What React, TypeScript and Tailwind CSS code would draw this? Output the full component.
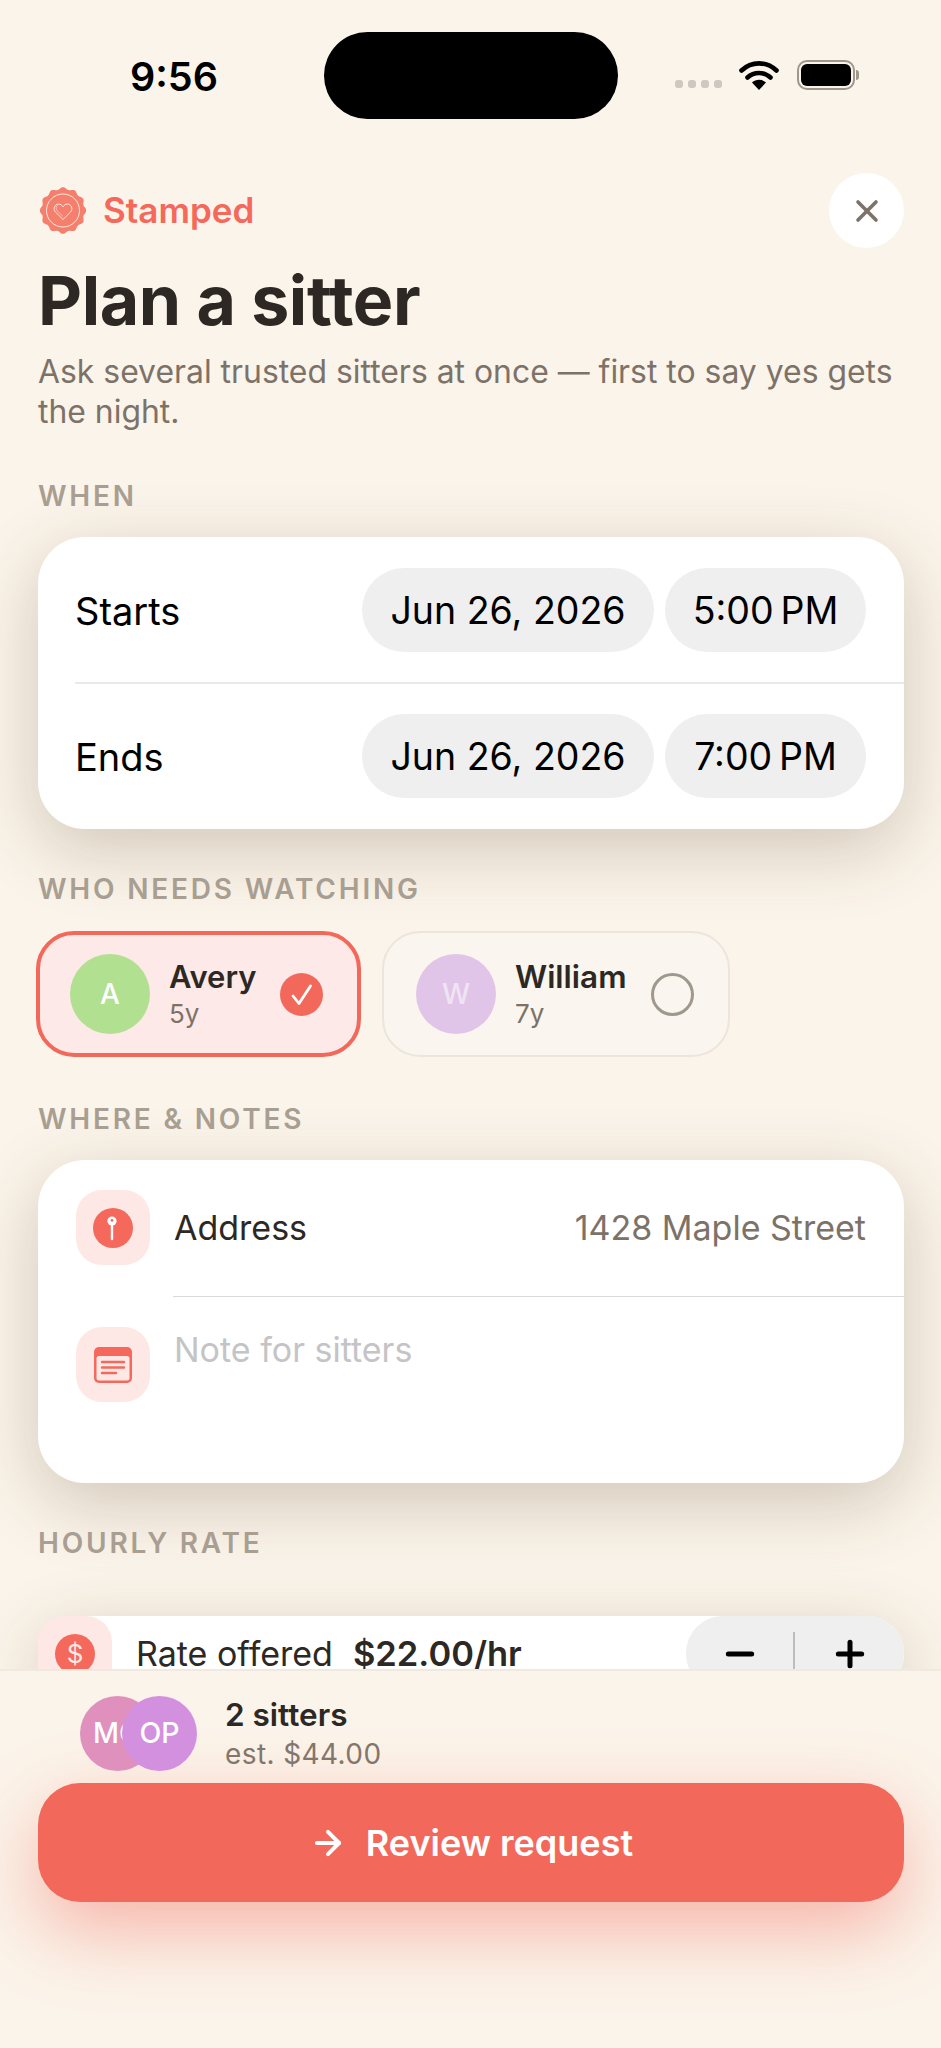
import { ArrowRight, Minus, Plus, X } from "lucide-react";

const FONT = "font-['Inter','Liberation_Sans',sans-serif]";

const sealPath = () => {
  const points: string[] = [];
  for (let i = 0; i < 144; i++) {
    const a = (i / 144) * Math.PI * 2;
    const r = 22.2 + 1.1 * Math.cos(a * 12);
    points.push(`${(23 + r * Math.sin(a)).toFixed(2)} ${(23 - r * Math.cos(a)).toFixed(2)}`);
  }
  return `M${points.join("L")}Z`;
};

const SealLogo = () => (
  <svg width="46" height="47" viewBox="0 0 46 46">
    <path d={sealPath()} fill="#f47f6c" />
    <circle cx="23" cy="23" r="16.5" fill="none" stroke="#fff" strokeWidth="0.9" opacity="0.9" />
    <path
      d="M23 32 L15.5 24.6 C12.6 21.4 14.6 16.6 18.6 16.6 C20.6 16.6 22 17.6 23 19.4 C24 17.6 25.4 16.6 27.4 16.6 C31.4 16.6 33.4 21.4 30.5 24.6 Z"
      fill="none"
      stroke="#fff"
      strokeWidth="0.9"
      opacity="0.85"
    />
    <path
      d="M23 29 L16.8 23 C15.6 21.4 16 18.8 17.6 17.8"
      fill="none"
      stroke="#fff"
      strokeWidth="0.7"
      opacity="0.7"
    />
  </svg>
);

const WifiIcon = () => (
  <svg width="40" height="30" viewBox="0 0 40 30">
    <path d="M20 30 L13 22.5 C17 18.8 23 18.8 27 22.5 Z" fill="#000" />
    <path d="M8.5 17.5 C15 11.5 25 11.5 31.5 17.5" fill="none" stroke="#000" strokeWidth="4.6" strokeLinecap="round" />
    <path d="M2.5 10.5 C12.5 1 27.5 1 37.5 10.5" fill="none" stroke="#000" strokeWidth="4.6" strokeLinecap="round" />
  </svg>
);

const PinIcon = () => (
  <svg width="40" height="40" viewBox="0 0 40 40">
    <circle cx="20" cy="20" r="20" fill="#f4695b" />
    <circle cx="19" cy="13" r="4.6" fill="#fff" />
    <circle cx="19" cy="12.4" r="1.4" fill="#f4695b" />
    <path d="M19 15 V31" stroke="#fff" strokeWidth="2.4" strokeLinecap="round" />
  </svg>
);

const NoteIcon = () => (
  <svg width="38" height="36" viewBox="0 0 38 36">
    <rect width="38" height="36" rx="5" fill="#f4695b" />
    <rect x="2.5" y="9" width="33" height="24.5" rx="2.5" fill="#fde8e6" />
    <path d="M8 15 H30 M8 20.5 H30 M8 26 H22" stroke="#f4695b" strokeWidth="2.4" strokeLinecap="round" />
  </svg>
);

const CheckMark = () => (
  <svg width="43" height="43" viewBox="0 0 43 43">
    <circle cx="21.5" cy="21.5" r="21.5" fill="#f2695b" />
    <path d="M13 23 L19 30.5 L30.5 13" fill="none" stroke="#fff" strokeWidth="2.8" strokeLinecap="round" strokeLinejoin="round" />
  </svg>
);

const Label = ({ text, className }: { text: string; className: string }) => (
  <p className={`text-[28px] leading-[34px] font-semibold tracking-[2.8px] text-[#a89e91] ${className}`}>{text}</p>
);

const Pill = ({ text, className }: { text: string; className: string }) => (
  <span className={`flex h-[84px] items-center justify-center rounded-[42px] bg-[#efefef] pt-[2px] text-[37.5px] leading-none text-black ${className}`}>
    {text}
  </span>
);

const TimeRow = ({ label, date, time }: { label: string; date: string; time: string }) => (
  <div className="flex h-[84px] items-center">
    <span className="flex-1 pt-[2px] text-[38px] text-black">{label}</span>
    <div className="flex gap-[11px]">
      <Pill text={date} className="w-[292px]" />
      <Pill text={time} className="w-[201px]" />
    </div>
  </div>
);

const Tile = ({ children }: { children: React.ReactNode }) => (
  <div className="flex h-[75px] w-[74px] shrink-0 items-center justify-center rounded-[26px] bg-[#fde8e6]">
    {children}
  </div>
);

export default function App() {
  return (
    <div className={`${FONT} flex h-[2048px] w-[941px] flex-col overflow-hidden bg-[#fbf4ea] text-[#2d2823]`}>
      <main className="h-[1669px] shrink-0 overflow-hidden pl-[38px] pr-[37px]">
        <div className="-ml-[38px] -mr-[37px] flex h-[173px] items-start pt-[32px]">
          <div className="w-[324px] pl-[130px] pt-[21px] text-[39.5px] leading-[48px] font-semibold text-black">9:56</div>
          <div className="h-[87px] w-[294px] rounded-[44px] bg-black" />
          <div className="flex items-center pl-[57px] pt-[28px]">
            <div className="mt-[18px] flex gap-[5px]">
              <span className="h-[8px] w-[8px] rounded-[3px] bg-[#cdc8c1]" />
              <span className="h-[8px] w-[8px] rounded-[3px] bg-[#cdc8c1]" />
              <span className="h-[8px] w-[8px] rounded-[3px] bg-[#cdc8c1]" />
              <span className="h-[8px] w-[8px] rounded-[3px] bg-[#cdc8c1]" />
            </div>
            <div className="ml-[17px]">
              <WifiIcon />
            </div>
            <div className="ml-[18px] flex items-center">
              <div className="flex h-[30px] w-[58px] rounded-[10px] border-[2px] border-[#9d978c] p-[2px]">
                <div className="flex-1 rounded-[6px] bg-black" />
              </div>
              <div className="ml-[1px] h-[10px] w-[3px] rounded-r-[3px] bg-[#9d978c]" />
            </div>
          </div>
        </div>

        <div className="flex h-[75px] items-center justify-between">
          <div className="flex items-center gap-[17px] pl-[2px]">
            <SealLogo />
            <span className="text-[35px] font-semibold text-[#f4695b]">Stamped</span>
          </div>
          <button className="flex h-[75px] w-[75px] items-center justify-center rounded-full bg-white">
            <X size={36} strokeWidth={2.4} color="#7d7268" />
          </button>
        </div>

        <h1 className="mt-[18px] text-[68px] leading-[68px] font-bold tracking-[-0.4px]">Plan a sitter</h1>
        <p className="mt-[18px] text-[31.9px] leading-[40px] text-[#7d7268]">
          Ask several trusted sitters at once — first to say yes gets the night.
        </p>

        <Label text="WHEN" className="mt-[47px]" />
        <section className="mt-[24px] h-[292px] rounded-[47px] bg-white py-[31px] pl-[37px] shadow-[0_20px_70px_rgba(80,60,30,0.24)]">
          <div className="pr-[38px]">
            <TimeRow label="Starts" date="Jun 26, 2026" time={"5:00\u2009PM"} />
          </div>
          <div className="my-[30px] h-[2px] bg-[#e9e9e9]" />
          <div className="pr-[38px]">
            <TimeRow label="Ends" date="Jun 26, 2026" time={"7:00\u2009PM"} />
          </div>
        </section>

        <Label text="WHO NEEDS WATCHING" className="mt-[43px]" />
        <div className="mt-[25px] -ml-[2px] flex gap-[21px]">
          <div className="flex h-[126px] w-[325px] items-center rounded-[38px] border-[4px] border-[#f2695b] bg-[#fde9e7] pl-[30px] pr-[34px]">
            <div className="flex h-[80px] w-[80px] items-center justify-center rounded-full bg-[#b0e090] text-[28px] font-medium text-white">
              A
            </div>
            <div className="ml-[19px] flex-1">
              <p className="text-[31px] leading-[36px] font-semibold">Avery</p>
              <p className="mt-[3px] text-[26px] leading-[32px] text-[#7d7268]">5y</p>
            </div>
            <CheckMark />
          </div>
          <div className="flex h-[126px] w-[348px] items-center rounded-[38px] border-[2px] border-[#ece5da] bg-[#faf5ee] pl-[32px] pr-[34px]">
            <div className="flex h-[80px] w-[80px] items-center justify-center rounded-full bg-[#e1c5e9] text-[28px] font-medium text-[#f0e4f3]">
              W
            </div>
            <div className="ml-[19px] flex-1">
              <p className="text-[31.5px] leading-[36px] font-semibold">William</p>
              <p className="mt-[3px] text-[26px] leading-[32px] text-[#7d7268]">7y</p>
            </div>
            <div className="h-[43px] w-[43px] rounded-full border-[3px] border-[#a0988c]" />
          </div>
        </div>

        <Label text="WHERE & NOTES" className="mt-[45px]" />
        <section className="mt-[24px] h-[323px] rounded-[47px] bg-white pt-[30px] pl-[38px] shadow-[0_20px_70px_rgba(80,60,30,0.24)]">
          <div className="flex items-center gap-[24px] pr-[38px]">
            <Tile>
              <PinIcon />
            </Tile>
            <span className="flex-1 text-[34px] text-[#2d2823]">Address</span>
            <span className="text-[34px] text-[#7d7268]">1428 Maple Street</span>
          </div>
          <div className="mt-[31px] ml-[97px] h-[1px] bg-[#d9d9dc]" />
          <div className="mt-[30px] flex items-start gap-[24px]">
            <Tile>
              <NoteIcon />
            </Tile>
            <span className="text-[34px] leading-[46px] text-[#c4c4c6]">Note for sitters</span>
          </div>
        </section>

        <Label text="HOURLY RATE" className="mt-[43px]" />
        <section className="mt-[56px] flex h-[75px] items-center overflow-visible rounded-[37px] bg-white shadow-[0_20px_70px_rgba(80,60,30,0.24)]">
          <Tile>
            <span className="flex h-[40px] w-[40px] items-center justify-center rounded-full bg-[#f4695b] text-[26px] text-[#fde8e6]">
              $
            </span>
          </Tile>
          <span className="ml-[24px] text-[34px]">Rate offered</span>
          <span className="ml-[20px] flex-1 text-[34.5px] font-semibold">$22.00/hr</span>
          <div className="flex h-[75px] w-[218px] items-center rounded-[37px] bg-[#efefef]">
            <div className="flex flex-1 justify-center">
              <Minus size={40} strokeWidth={3} color="#000" />
            </div>
            <div className="h-[44px] w-[2px] bg-[#bdbdbd]" />
            <div className="flex w-[109px] justify-center">
              <Plus size={40} strokeWidth={3} color="#000" />
            </div>
          </div>
        </section>
      </main>

      <footer className="relative flex-1 border-t-[2px] border-[#f1e9dd] bg-[#fbf4ea] pl-[38px] pr-[37px] pt-[25px]">
        <div className="flex items-center pl-[42px]">
          <div className="flex h-[75px] w-[75px] items-center overflow-hidden rounded-full bg-[#e090bd] pl-[13px] text-[28.5px] font-medium whitespace-nowrap text-white">
            MO
          </div>
          <div className="-ml-[33px] flex h-[75px] w-[75px] items-center justify-center rounded-full bg-[#d390de] text-[28.5px] font-medium text-white">
            OP
          </div>
          <div className="ml-[28px]">
            <p className="text-[31.5px] leading-[36px] font-semibold">2 sitters</p>
            <p className="mt-[5px] text-[28px] leading-[32px] tracking-[0.4px] text-[#83766c]">est. $44.00</p>
          </div>
        </div>
        <button className="mt-[12px] flex h-[119px] w-full items-center justify-center gap-[19px] rounded-[42px] bg-[#f2685b] text-[36px] font-semibold text-white shadow-[0_28px_76px_rgba(242,104,91,0.46)]">
          <ArrowRight size={38} strokeWidth={2.5} />
          Review request
        </button>
      </footer>
    </div>
  );
}
